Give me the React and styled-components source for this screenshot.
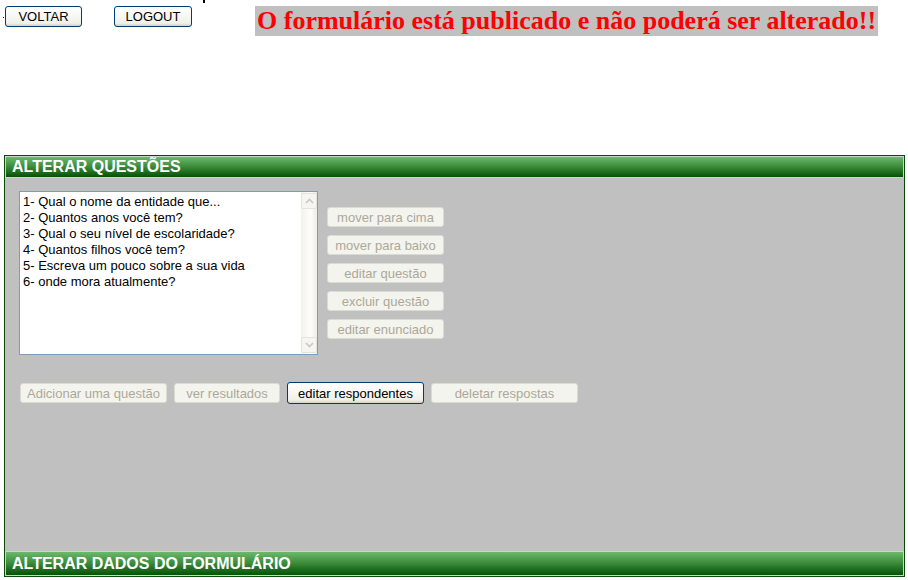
import React from "react";
import styled, { createGlobalStyle } from "styled-components";

const Global = createGlobalStyle`
  html, body { margin: 0; padding: 0; background: #fff; }
  body { font-family: "Liberation Sans", Arial, sans-serif; }
`;

const Page = styled.div`
  width: 908px;
  height: 580px;
  position: relative;
  overflow: hidden;
`;

const TopBar = styled.div`
  display: flex;
  align-items: flex-start;
  padding: 6px 0 0 3px;
  height: 155px;
  box-sizing: border-box;
  position: relative;
`;

const Dot = styled.span`
  width: 1px;
  height: 1px;
  background: #000;
  margin-top: 11px;
  margin-right: 1px;
`;

const Tick = styled.span`
  position: absolute;
  left: 203px;
  top: 0;
  width: 2px;
  height: 3px;
  background: #000;
`;

const NavButton = styled.button`
  height: 21px;
  width: ${(p) => p.$w}px;
  margin-right: ${(p) => p.$mr || 0}px;
  box-sizing: border-box;
  border: 1px solid #003c74;
  border-radius: 3px;
  background: linear-gradient(#ffffff, #f0f0ea 85%, #d6d0c5);
  font-family: "Liberation Sans", Arial, sans-serif;
  font-size: 13px;
  color: #000;
  padding: 0;
  cursor: pointer;
`;

const Notice = styled.h1`
  margin: 0;
  background: #c0c0c0;
  color: #ff0000;
  font-family: "Liberation Serif", "Times New Roman", serif;
  font-weight: bold;
  font-size: 26px;
  line-height: 30px;
  height: 30px;
  padding: 0 2px;
  white-space: nowrap;
`;

const Panel = styled.div`
  margin-left: 4px;
  width: 901px;
  box-sizing: border-box;
  border: 1px solid #0b4a0b;
  display: flex;
  flex-direction: column;
`;

const SectionHeader = styled.div`
  height: ${(p) => p.$h}px;
  box-sizing: border-box;
  border: 1px solid #c8d8c8;
  background: linear-gradient(#6cb96c, #3f8f3f 45%, #045204);
  color: #fff;
  font-family: "Liberation Sans", Arial, sans-serif;
  font-weight: bold;
  font-size: 16px;
  line-height: ${(p) => p.$h - 2}px;
  padding-left: 6px;
`;

const Body = styled.div`
  height: 373px;
  background: #c0c0c0;
  padding: 13px 0 0 14px;
  box-sizing: border-box;
`;

const TopRow = styled.div`
  display: flex;
  align-items: flex-start;
  gap: 9px;
`;

const ListBox = styled.div`
  width: 299px;
  height: 164px;
  box-sizing: border-box;
  border: 1px solid #7f9db9;
  background: #fff;
  display: flex;
`;

const ListItems = styled.ul`
  list-style: none;
  margin: 0;
  padding: 2px 0 0 3px;
  flex: 1;
  font-family: "Liberation Sans", Arial, sans-serif;
  font-size: 13px;
  line-height: 16px;
  color: #000;
`;

const Scroll = styled.div`
  width: 16px;
  background: linear-gradient(90deg, #f3f2ed, #fdfdfa 60%, #eeede6);
  display: flex;
  flex-direction: column;
  justify-content: space-between;
  padding: 1px 0;
  box-sizing: border-box;
`;

const ScrollBtn = styled.div`
  height: 16px;
  border: 1px solid #e4e3de;
  border-radius: 2px;
  background: #f6f5f1;
  display: flex;
  align-items: center;
  justify-content: center;
  box-sizing: border-box;
`;

const SideButtons = styled.div`
  display: flex;
  flex-direction: column;
  gap: 8px;
  margin-top: 16px;
`;

const FormButton = styled.button`
  width: ${(p) => p.$w}px;
  box-sizing: border-box;
  padding: 0;
  font-family: "Liberation Sans", Arial, sans-serif;
  font-size: 13px;
  border-radius: 3px;
  border: 1px solid ${(p) => (p.disabled ? "#dcdbd3" : "#003c74")};
  background: ${(p) =>
    p.disabled ? "#f4f4ee" : "linear-gradient(#ffffff, #f0f0ea 85%, #d6d0c5)"};
  color: ${(p) => (p.disabled ? "#aca899" : "#000")};
  height: ${(p) => (p.disabled ? 20 : 22)}px;
  margin-top: ${(p) => (p.disabled ? 0 : -1)}px;
`;

const BottomRow = styled.div`
  display: flex;
  gap: 7px;
  margin-top: 28px;
  margin-left: 1px;
  align-items: flex-start;
`;

const Chevron = ({ up }) => (
  <svg width="9" height="6" viewBox="0 0 9 6">
    <path
      d={up ? "M1 5 L4.5 1.5 L8 5" : "M1 1 L4.5 4.5 L8 1"}
      fill="none"
      stroke="#c9c8c2"
      strokeWidth="1.6"
    />
  </svg>
);

const questions = [
  "1- Qual o nome da entidade que...",
  "2- Quantos anos você tem?",
  "3- Qual o seu nível de escolaridade?",
  "4- Quantos filhos você tem?",
  "5- Escreva um pouco sobre a sua vida",
  "6- onde mora atualmente?",
];

export default function App() {
  return (
    <Page>
      <Global />
      <TopBar>
        <Dot />
        <NavButton $w={77} $mr={32}>VOLTAR</NavButton>
        <NavButton $w={78} $mr={63}>LOGOUT</NavButton>
        <Tick />
        <Notice>O formulário está publicado e não poderá ser alterado!!</Notice>
      </TopBar>
      <Panel>
        <SectionHeader $h={22}>ALTERAR QUESTÕES</SectionHeader>
        <Body>
          <TopRow>
            <ListBox>
              <ListItems>
                {questions.map((q) => (
                  <li key={q}>{q}</li>
                ))}
              </ListItems>
              <Scroll>
                <ScrollBtn>
                  <Chevron up />
                </ScrollBtn>
                <ScrollBtn>
                  <Chevron />
                </ScrollBtn>
              </Scroll>
            </ListBox>
            <SideButtons>
              <FormButton disabled $w={117}>mover para cima</FormButton>
              <FormButton disabled $w={117}>mover para baixo</FormButton>
              <FormButton disabled $w={117}>editar questão</FormButton>
              <FormButton disabled $w={117}>excluir questão</FormButton>
              <FormButton disabled $w={117}>editar enunciado</FormButton>
            </SideButtons>
          </TopRow>
          <BottomRow>
            <FormButton disabled $w={147}>Adicionar uma questão</FormButton>
            <FormButton disabled $w={106}>ver resultados</FormButton>
            <FormButton $w={137}>editar respondentes</FormButton>
            <FormButton disabled $w={147}>deletar respostas</FormButton>
          </BottomRow>
        </Body>
        <SectionHeader $h={25}>ALTERAR DADOS DO FORMULÁRIO</SectionHeader>
      </Panel>
    </Page>
  );
}
